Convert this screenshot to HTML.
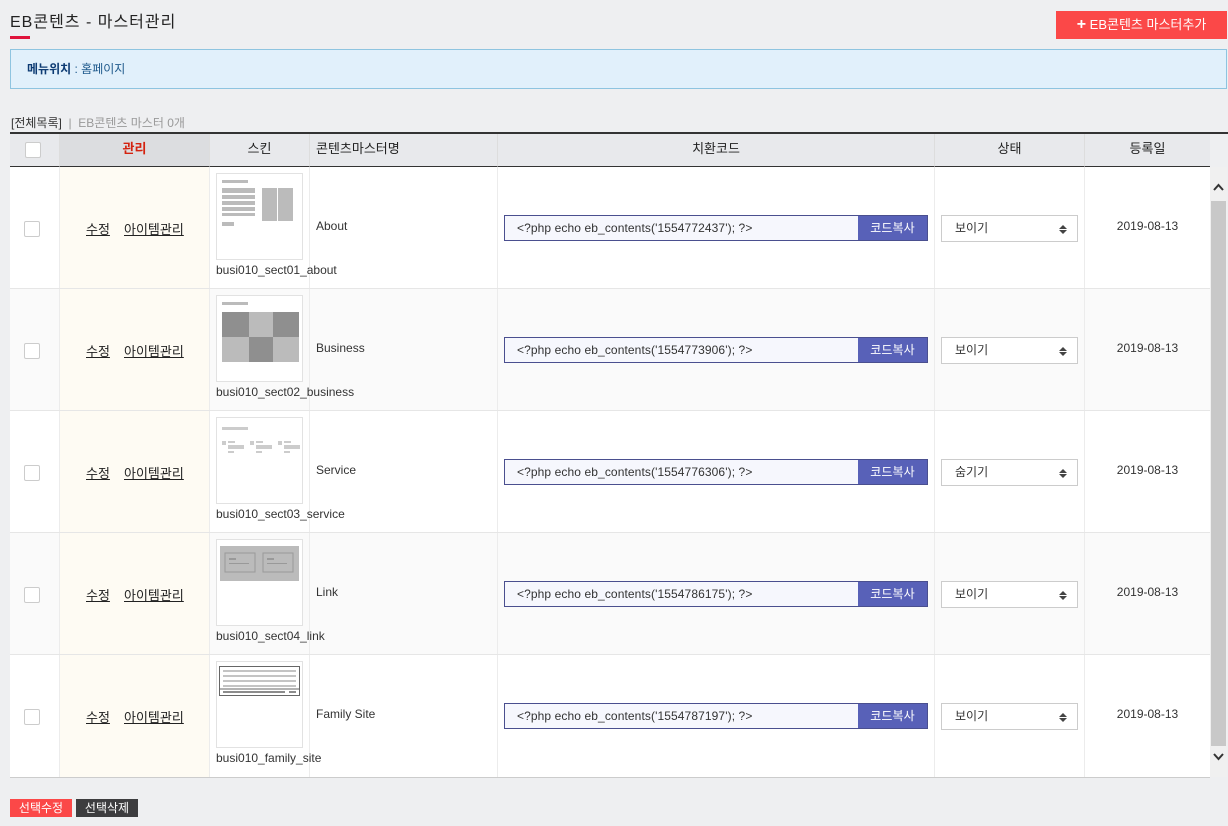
<!DOCTYPE html>
<html><head><meta charset="utf-8">
<style>
*{box-sizing:border-box;margin:0;padding:0}
body{width:1228px;height:826px;background:#eeeff1;font-family:"Liberation Sans","Noto Sans CJK KR",sans-serif;font-size:12px;color:#333;position:relative;overflow:hidden}
.a{position:absolute}
.title{left:10px;top:8px;font-size:16px;color:#222;letter-spacing:1px}
.bar{left:10px;top:36px;width:20px;height:3px;background:#e0143c}
.addbtn{left:1056px;top:11px;width:171px;height:28px;background:#fb4848;color:#fff;font-size:13px;line-height:28px;text-align:center}
.loc{left:10px;top:49px;width:1217px;height:40px;background:#e1f0fb;border:1px solid #8ec4e0;padding-left:16px;line-height:38px;font-size:12px;color:#1f5a8c}
.loc b{color:#0d3b73}
.cnt{left:11px;top:114px;font-size:12px;color:#333}
.cnt span{color:#999}
.tbl{left:10px;top:132px;width:1200px;height:646px;background:#fff;border-top:2px solid #333;border-bottom:1px solid #ccc}
.hd{position:absolute;top:0;height:33px;background:#e8e9ec;border-bottom:1px solid #333;line-height:30px;text-align:center;font-size:13px;color:#222}
.row{position:absolute;left:0;width:1200px;height:122px;border-bottom:1px solid #e6e6e6}
.cell{position:absolute;top:0;height:100%;border-right:1px solid #ececec}
.cb{width:16px;height:16px;border:1px solid #ccc;border-radius:2px;background:#fff;position:absolute}
.lk{position:absolute;top:52px;font-size:13px;color:#222;text-decoration:underline}
.thumb{position:absolute;left:6px;top:6px;width:87px;height:87px;border:1px solid #e2e2e2;background:#fff}
.skin{position:absolute;left:6px;top:96px;font-size:12px;color:#333;white-space:nowrap}
.name{position:absolute;left:6px;top:52px;font-size:12px;color:#333}
.code{position:absolute;left:6px;top:48px;width:424px;height:26px;border:1px solid #4a4f8f;background:#f6f7fd;font-size:12px;line-height:24px;padding-left:12px;color:#333;letter-spacing:0.1px}
.cbtn{position:absolute;right:0;top:0;width:69px;height:24px;background:#5861b8;color:#fff;text-align:center;line-height:24px;font-size:12px}
.sel{position:absolute;left:6px;top:48px;width:137px;height:27px;border:1px solid #ccc;background:#fff;font-size:12px;line-height:25px;padding-left:13px;color:#333}
.date{position:absolute;left:0;width:125px;top:52px;text-align:center;font-size:12px;color:#333}
.sb{left:1210px;top:167px;width:17px;height:610px;background:#f0f0f0}
.btn1{left:10px;top:799px;width:62px;height:18px;background:#fb4848;color:#fff;font-size:12px;line-height:18px;text-align:center}
.btn2{left:76px;top:799px;width:62px;height:18px;background:#3d3d3f;color:#fff;font-size:12px;line-height:18px;text-align:center}
</style></head><body>
<div class="a title">EB콘텐츠 - 마스터관리</div>
<div class="a bar"></div>
<div class="a addbtn"><b style="font-size:16px">+</b> EB콘텐츠 마스터추가</div>
<div class="a loc"><b>메뉴위치</b> : 홈페이지</div>
<div class="a cnt">[전체목록] <span>&nbsp;|&nbsp; EB콘텐츠 마스터 0개</span></div>

<div class="a tbl">
 <div class="hd" style="left:0;width:50px;border-right:1px solid #ddd"><div class="cb" style="left:15px;top:8px"></div></div>
 <div class="hd" style="left:50px;width:150px;background:#dcdde0;color:#d4220f;font-weight:bold;border-right:1px solid #ddd">관리</div>
 <div class="hd" style="left:200px;width:100px;border-right:1px solid #ddd">스킨</div>
 <div class="hd" style="left:300px;width:188px;border-right:1px solid #ddd;text-align:left;padding-left:6px">콘텐츠마스터명</div>
 <div class="hd" style="left:488px;width:437px;border-right:1px solid #ddd">치환코드</div>
 <div class="hd" style="left:925px;width:150px;border-right:1px solid #ddd">상태</div>
 <div class="hd" style="left:1075px;width:125px">등록일</div>

 <div class="row" style="top:33px;background:#fff">
  <div class="cell" style="left:0;width:50px"><div class="cb" style="left:14px;top:54px"></div></div>
  <div class="cell" style="left:50px;width:150px;background:#fefbf3"><span class="lk" style="left:26px">수정</span><span class="lk" style="left:64px">아이템관리</span></div>
  <div class="cell" style="left:200px;width:100px"><div class="thumb"><svg width="85" height="85"><rect x="5" y="6" width="26" height="3" fill="#bbb"/><rect x="5" y="14" width="33" height="5" fill="#bbb"/><rect x="5" y="21" width="33" height="4" fill="#bbb"/><rect x="5" y="27" width="33" height="4" fill="#bbb"/><rect x="5" y="33" width="33" height="4" fill="#bbb"/><rect x="5" y="39" width="33" height="3" fill="#bbb"/><rect x="5" y="48" width="12" height="4" fill="#bbb"/><rect x="45" y="14" width="15" height="33" fill="#bbb"/><rect x="61" y="14" width="15" height="33" fill="#bbb"/></svg></div><div class="skin">busi010_sect01_about</div></div>
  <div class="cell" style="left:300px;width:188px"><div class="name">About</div></div>
  <div class="cell" style="left:488px;width:437px"><div class="code">&lt;?php echo eb_contents('1554772437'); ?&gt;<div class="cbtn">코드복사</div></div></div>
  <div class="cell" style="left:925px;width:150px"><div class="sel">보이기<svg class="a" style="right:10px;top:9px" width="8" height="9"><path d="M0 4L4 0L8 4Z M0 5L4 9L8 5Z" fill="#444"/></svg></div></div>
  <div class="cell" style="left:1075px;width:125px;border:none"><div class="date">2019-08-13</div></div>
 </div>

 <div class="row" style="top:155px;background:#fafafa">
  <div class="cell" style="left:0;width:50px"><div class="cb" style="left:14px;top:54px"></div></div>
  <div class="cell" style="left:50px;width:150px;background:#fefbf3"><span class="lk" style="left:26px">수정</span><span class="lk" style="left:64px">아이템관리</span></div>
  <div class="cell" style="left:200px;width:100px"><div class="thumb"><svg width="85" height="85"><rect x="5" y="6" width="26" height="3" fill="#bbb"/><rect x="5" y="16" width="27" height="25" fill="#8f8f8f"/><rect x="32" y="16" width="24" height="25" fill="#bbb"/><rect x="56" y="16" width="26" height="25" fill="#8f8f8f"/><rect x="5" y="41" width="27" height="25" fill="#bbb"/><rect x="32" y="41" width="24" height="25" fill="#8f8f8f"/><rect x="56" y="41" width="26" height="25" fill="#bbb"/></svg></div><div class="skin">busi010_sect02_business</div></div>
  <div class="cell" style="left:300px;width:188px"><div class="name">Business</div></div>
  <div class="cell" style="left:488px;width:437px"><div class="code">&lt;?php echo eb_contents('1554773906'); ?&gt;<div class="cbtn">코드복사</div></div></div>
  <div class="cell" style="left:925px;width:150px"><div class="sel">보이기<svg class="a" style="right:10px;top:9px" width="8" height="9"><path d="M0 4L4 0L8 4Z M0 5L4 9L8 5Z" fill="#444"/></svg></div></div>
  <div class="cell" style="left:1075px;width:125px;border:none"><div class="date">2019-08-13</div></div>
 </div>

 <div class="row" style="top:277px;background:#fff">
  <div class="cell" style="left:0;width:50px"><div class="cb" style="left:14px;top:54px"></div></div>
  <div class="cell" style="left:50px;width:150px;background:#fefbf3"><span class="lk" style="left:26px">수정</span><span class="lk" style="left:64px">아이템관리</span></div>
  <div class="cell" style="left:200px;width:100px"><div class="thumb"><svg width="85" height="85"><rect x="5" y="9" width="26" height="3" fill="#ccc"/><g fill="#ccc"><rect x="5" y="23" width="4" height="4"/><rect x="11" y="23" width="7" height="2"/><rect x="11" y="27" width="16" height="4"/><rect x="11" y="33" width="6" height="2"/><rect x="33" y="23" width="4" height="4"/><rect x="39" y="23" width="7" height="2"/><rect x="39" y="27" width="16" height="4"/><rect x="39" y="33" width="6" height="2"/><rect x="61" y="23" width="4" height="4"/><rect x="67" y="23" width="7" height="2"/><rect x="67" y="27" width="16" height="4"/><rect x="67" y="33" width="6" height="2"/></g></svg></div><div class="skin">busi010_sect03_service</div></div>
  <div class="cell" style="left:300px;width:188px"><div class="name">Service</div></div>
  <div class="cell" style="left:488px;width:437px"><div class="code">&lt;?php echo eb_contents('1554776306'); ?&gt;<div class="cbtn">코드복사</div></div></div>
  <div class="cell" style="left:925px;width:150px"><div class="sel">숨기기<svg class="a" style="right:10px;top:9px" width="8" height="9"><path d="M0 4L4 0L8 4Z M0 5L4 9L8 5Z" fill="#444"/></svg></div></div>
  <div class="cell" style="left:1075px;width:125px;border:none"><div class="date">2019-08-13</div></div>
 </div>

 <div class="row" style="top:399px;background:#fafafa">
  <div class="cell" style="left:0;width:50px"><div class="cb" style="left:14px;top:54px"></div></div>
  <div class="cell" style="left:50px;width:150px;background:#fefbf3"><span class="lk" style="left:26px">수정</span><span class="lk" style="left:64px">아이템관리</span></div>
  <div class="cell" style="left:200px;width:100px"><div class="thumb"><svg width="85" height="85"><rect x="3" y="6" width="79" height="35" fill="#bbb"/><rect x="8" y="13" width="30" height="19" fill="none" stroke="#999"/><rect x="46" y="13" width="30" height="19" fill="none" stroke="#999"/><rect x="12" y="18" width="7" height="2" fill="#999"/><rect x="12" y="23" width="20" height="1" fill="#999"/><rect x="50" y="18" width="7" height="2" fill="#999"/><rect x="50" y="23" width="20" height="1" fill="#999"/></svg></div><div class="skin">busi010_sect04_link</div></div>
  <div class="cell" style="left:300px;width:188px"><div class="name">Link</div></div>
  <div class="cell" style="left:488px;width:437px"><div class="code">&lt;?php echo eb_contents('1554786175'); ?&gt;<div class="cbtn">코드복사</div></div></div>
  <div class="cell" style="left:925px;width:150px"><div class="sel">보이기<svg class="a" style="right:10px;top:9px" width="8" height="9"><path d="M0 4L4 0L8 4Z M0 5L4 9L8 5Z" fill="#444"/></svg></div></div>
  <div class="cell" style="left:1075px;width:125px;border:none"><div class="date">2019-08-13</div></div>
 </div>

 <div class="row" style="top:521px;background:#fff;border-bottom:none">
  <div class="cell" style="left:0;width:50px"><div class="cb" style="left:14px;top:54px"></div></div>
  <div class="cell" style="left:50px;width:150px;background:#fefbf3"><span class="lk" style="left:26px">수정</span><span class="lk" style="left:64px">아이템관리</span></div>
  <div class="cell" style="left:200px;width:100px"><div class="thumb"><svg width="85" height="85"><rect x="2.5" y="4.5" width="80" height="29" fill="#fff" stroke="#666"/><g stroke="#888"><line x1="6" y1="9" x2="79" y2="9"/><line x1="6" y1="14" x2="79" y2="14"/><line x1="6" y1="19" x2="79" y2="19"/><line x1="6" y1="24" x2="79" y2="24"/></g><line x1="3" y1="27" x2="82" y2="27" stroke="#666"/><line x1="6" y1="30" x2="68" y2="30" stroke="#666" stroke-width="1.5"/><line x1="72" y1="30" x2="79" y2="30" stroke="#666" stroke-width="1.5"/></svg></div><div class="skin">busi010_family_site</div></div>
  <div class="cell" style="left:300px;width:188px"><div class="name">Family Site</div></div>
  <div class="cell" style="left:488px;width:437px"><div class="code">&lt;?php echo eb_contents('1554787197'); ?&gt;<div class="cbtn">코드복사</div></div></div>
  <div class="cell" style="left:925px;width:150px"><div class="sel">보이기<svg class="a" style="right:10px;top:9px" width="8" height="9"><path d="M0 4L4 0L8 4Z M0 5L4 9L8 5Z" fill="#444"/></svg></div></div>
  <div class="cell" style="left:1075px;width:125px;border:none"><div class="date">2019-08-13</div></div>
 </div>
</div>

<div class="a" style="left:1210px;top:132px;width:18px;height:2px;background:#333"></div>
<div class="a" style="left:1210px;top:134px;width:17px;height:33px;background:#eeeff1"></div>
<div class="a sb">
 <svg class="a" style="left:3px;top:16px" width="11" height="8"><path d="M1 7L5.5 2L10 7" fill="none" stroke="#333" stroke-width="2"/></svg>
 <div class="a" style="left:1px;top:34px;width:15px;height:545px;background:#c8c8c8"></div>
 <svg class="a" style="left:3px;top:586px" width="11" height="8"><path d="M1 1L5.5 6L10 1" fill="none" stroke="#333" stroke-width="2"/></svg>
</div>

<div class="a btn1">선택수정</div>
<div class="a btn2">선택삭제</div>
</body></html>
